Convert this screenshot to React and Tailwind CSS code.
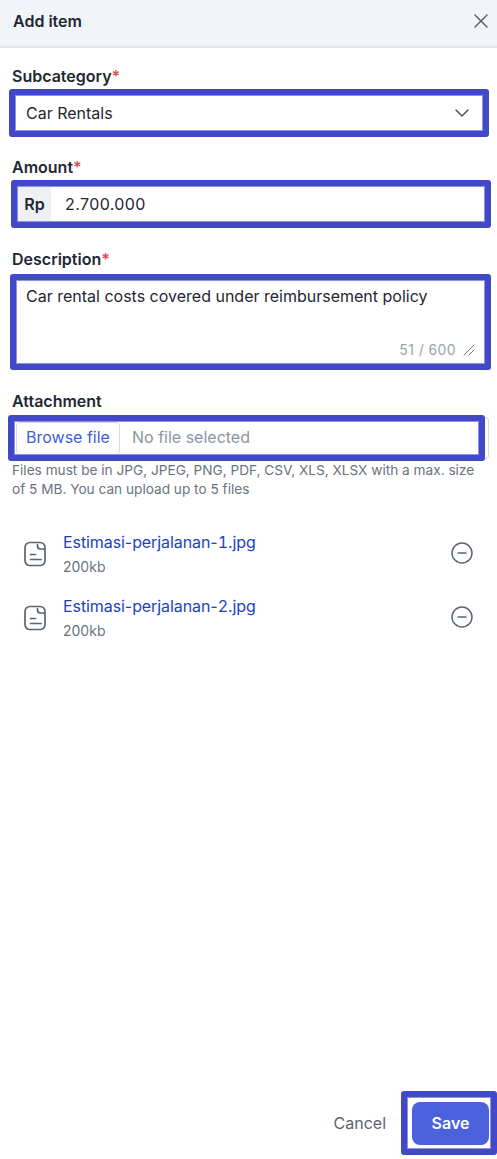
import React from 'react'
import { ChevronDown, X, CircleMinus } from 'lucide-react'

const highlight = 'border-[7px] border-[#4149c9] rounded-[3px] outline outline-1 outline-[#8d92e2] -outline-offset-[7px]'

function Label({ text, required }) {
  return (
    <div className="ml-3 h-6 text-[16px] leading-6 font-semibold text-[#1f2733]">
      {text}
      {required && <span className="text-[#e5484d]">*</span>}
    </div>
  )
}

function FileIcon() {
  return (
    <svg width="22" height="26" viewBox="0 0 22 26" fill="none" stroke="#5b6472" strokeWidth="1.7" strokeLinecap="round" strokeLinejoin="round">
      <rect x="1" y="1.500" width="20" height="23" rx="5" />
      <path d="M13.500 3.500v1.500q0 3 3 3h3.500" />
      <path d="M6.500 13.500h5" />
      <path d="M6.500 18.500h10.500" />
    </svg>
  )
}

function FileRow({ index }) {
  return (
    <div className="h-16 flex items-center pl-6 pr-[23px]">
      <FileIcon />
      <div className="ml-[17px] flex-1 -mt-[2px]">
        <div className="text-[16px] leading-6 tracking-[-0.08px] text-[#1d3fc4]">
          Estimasi-perjalanan-<span className="tabular-nums">{index}</span>.jpg
        </div>
        <div className="text-[14px] leading-5 mt-[3px] text-[#6b7280]">200kb</div>
      </div>
      <CircleMinus size={24} strokeWidth={1.5} className="-mt-[2px] text-[#5b6472]" />
    </div>
  )
}

export default function App() {
  return (
    <div className="w-[497px] h-[1159px] flex flex-col bg-white overflow-hidden font-['Inter',sans-serif]">
      <div className="h-[48px] flex items-center justify-between pb-[4px] pl-[13px] pr-[4px] bg-[#f1f4f9] border-b-2 border-[#e2e5ea]">
        <span className="text-[16px] font-semibold text-[#1f2733]">Add item</span>
        <X size={24} strokeWidth={1.5} className="text-[#5b6472]" />
      </div>

      <div className="flex-1 pt-4">
        <Label text="Subcategory" required />
        <div className={`mt-[1px] ml-[9px] w-[480px] h-[48px] flex items-center justify-between pl-[10px] pr-[8px] ${highlight}`}>
          <span className="text-[16px] text-[#1f2733]">Car Rentals</span>
          <ChevronDown size={24} strokeWidth={1.5} className="text-[#4b5563]" />
        </div>

        <div className="mt-[18px]">
          <Label text="Amount" required />
        </div>
        <div className={`mt-[1px] ml-[11px] w-[480px] h-[48px] flex items-center ${highlight}`}>
          <div className="w-[33px] h-full flex items-center justify-center bg-[#eef0f3] text-[16px] font-semibold text-[#1f2733]">Rp</div>
          <span className="ml-[14px] text-[16px] tracking-[0.4px] text-[#1f2733]">2.700.000</span>
        </div>

        <div className="mt-[19px]">
          <Label text="Description" required />
        </div>
        <div className={`relative mt-[3px] ml-[10px] w-[481px] h-[96px] pl-[9px] pt-[3px] ${highlight}`}>
          <span className="text-[16px] leading-6 text-[#1f2733]">Car rental costs covered under reimbursement policy</span>
          <div className="absolute right-[9px] bottom-[3px] flex items-center gap-[7px] text-[14px] tracking-[0.4px] text-[#9aa3af]">
            51 / 600
            <svg width="12" height="12" viewBox="0 0 12 12" fill="none" stroke="#6b7280" strokeWidth="1" strokeLinecap="round">
              <path d="M1 11 11 1" />
              <path d="M6 11 11 6" />
            </svg>
          </div>
        </div>

        <div className="mt-[19px]">
          <Label text="Attachment" />
        </div>
        <div className={`relative mt-[2px] ml-[8px] w-[477px] h-[46px] flex items-center ${highlight}`}>
          <div className="ml-px pb-[2px] w-[104px] h-[33px] flex items-center justify-center bg-white border border-[#d5d9e0] rounded-[4px] text-[16px] text-[#3f5ee0]">Browse file</div>
          <span className="ml-[12px] pb-[2px] text-[16px] text-[#8d95a3]">No file selected</span>
          <div className="absolute -right-[11px] -top-[5px] -bottom-[5px] w-[4px] border-r border-y border-[#d5d9e0] rounded-r-[4px]" />
        </div>
        <p className="mx-3 text-[13.65px] leading-[19px] text-[#6b7280]">
          Files must be in JPG, JPEG, PNG, PDF, CSV, XLS, XLSX with a max. size of 5 MB. You can upload up to 5 files
        </p>

        <div className="mt-[23px]">
          <FileRow index={1} />
          <FileRow index={2} />
        </div>
      </div>

      <div className="flex items-center justify-end pb-[4px]">
        <span className="mr-[15px] text-[16px] text-[#5b6472]">Cancel</span>
        <div className={`w-[96px] h-[64px] pl-[4px] pr-0 flex items-center ${highlight}`}>
          <button className="w-[77px] h-[43px] rounded-[8px] bg-[#4b62dc] text-[16px] font-semibold text-white">Save</button>
        </div>
      </div>
    </div>
  )
}
